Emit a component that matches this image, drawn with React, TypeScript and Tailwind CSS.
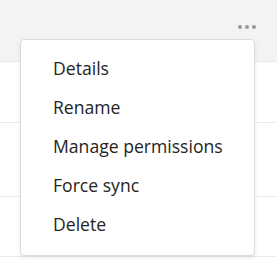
export default function App() {
  const items = ["Details", "Rename", "Manage permissions", "Force sync", "Delete"];
  return (
    <div className="relative w-[277px] h-[274px] bg-white overflow-hidden" style={{ fontFamily: '"Open Sans", "Noto Sans", sans-serif' }}>
      <div className="h-[62px] bg-[#f3f3f3] border-b border-[#e8e8e8] flex justify-end items-center pr-[21px] pt-[1px]">
        <div className="flex gap-[3px] mt-[-8px]">
          <span className="block w-[4px] h-[4px] rounded-full bg-[#9a9a9a]" />
          <span className="block w-[4px] h-[4px] rounded-full bg-[#9a9a9a]" />
          <span className="block w-[4px] h-[4px] rounded-full bg-[#9a9a9a]" />
        </div>
      </div>
      <div className="h-[61px] border-b border-[#ebebeb]" />
      <div className="h-[74px] border-b border-[#ebebeb]" />
      <div className="h-[60px] border-b border-[#ebebeb]" />
      <div className="absolute left-[20px] top-[39px] w-[235px] h-[217px] bg-white border border-[#d8dce2] rounded-[4px] shadow-[0_2px_4px_rgba(0,0,0,0.08)] pt-[9px]">
        {items.map((t) => (
          <div key={t} className="h-[39px] flex items-center pl-[32px] text-[17.6px] text-[#242424]">
            {t}
          </div>
        ))}
      </div>
    </div>
  );
}
